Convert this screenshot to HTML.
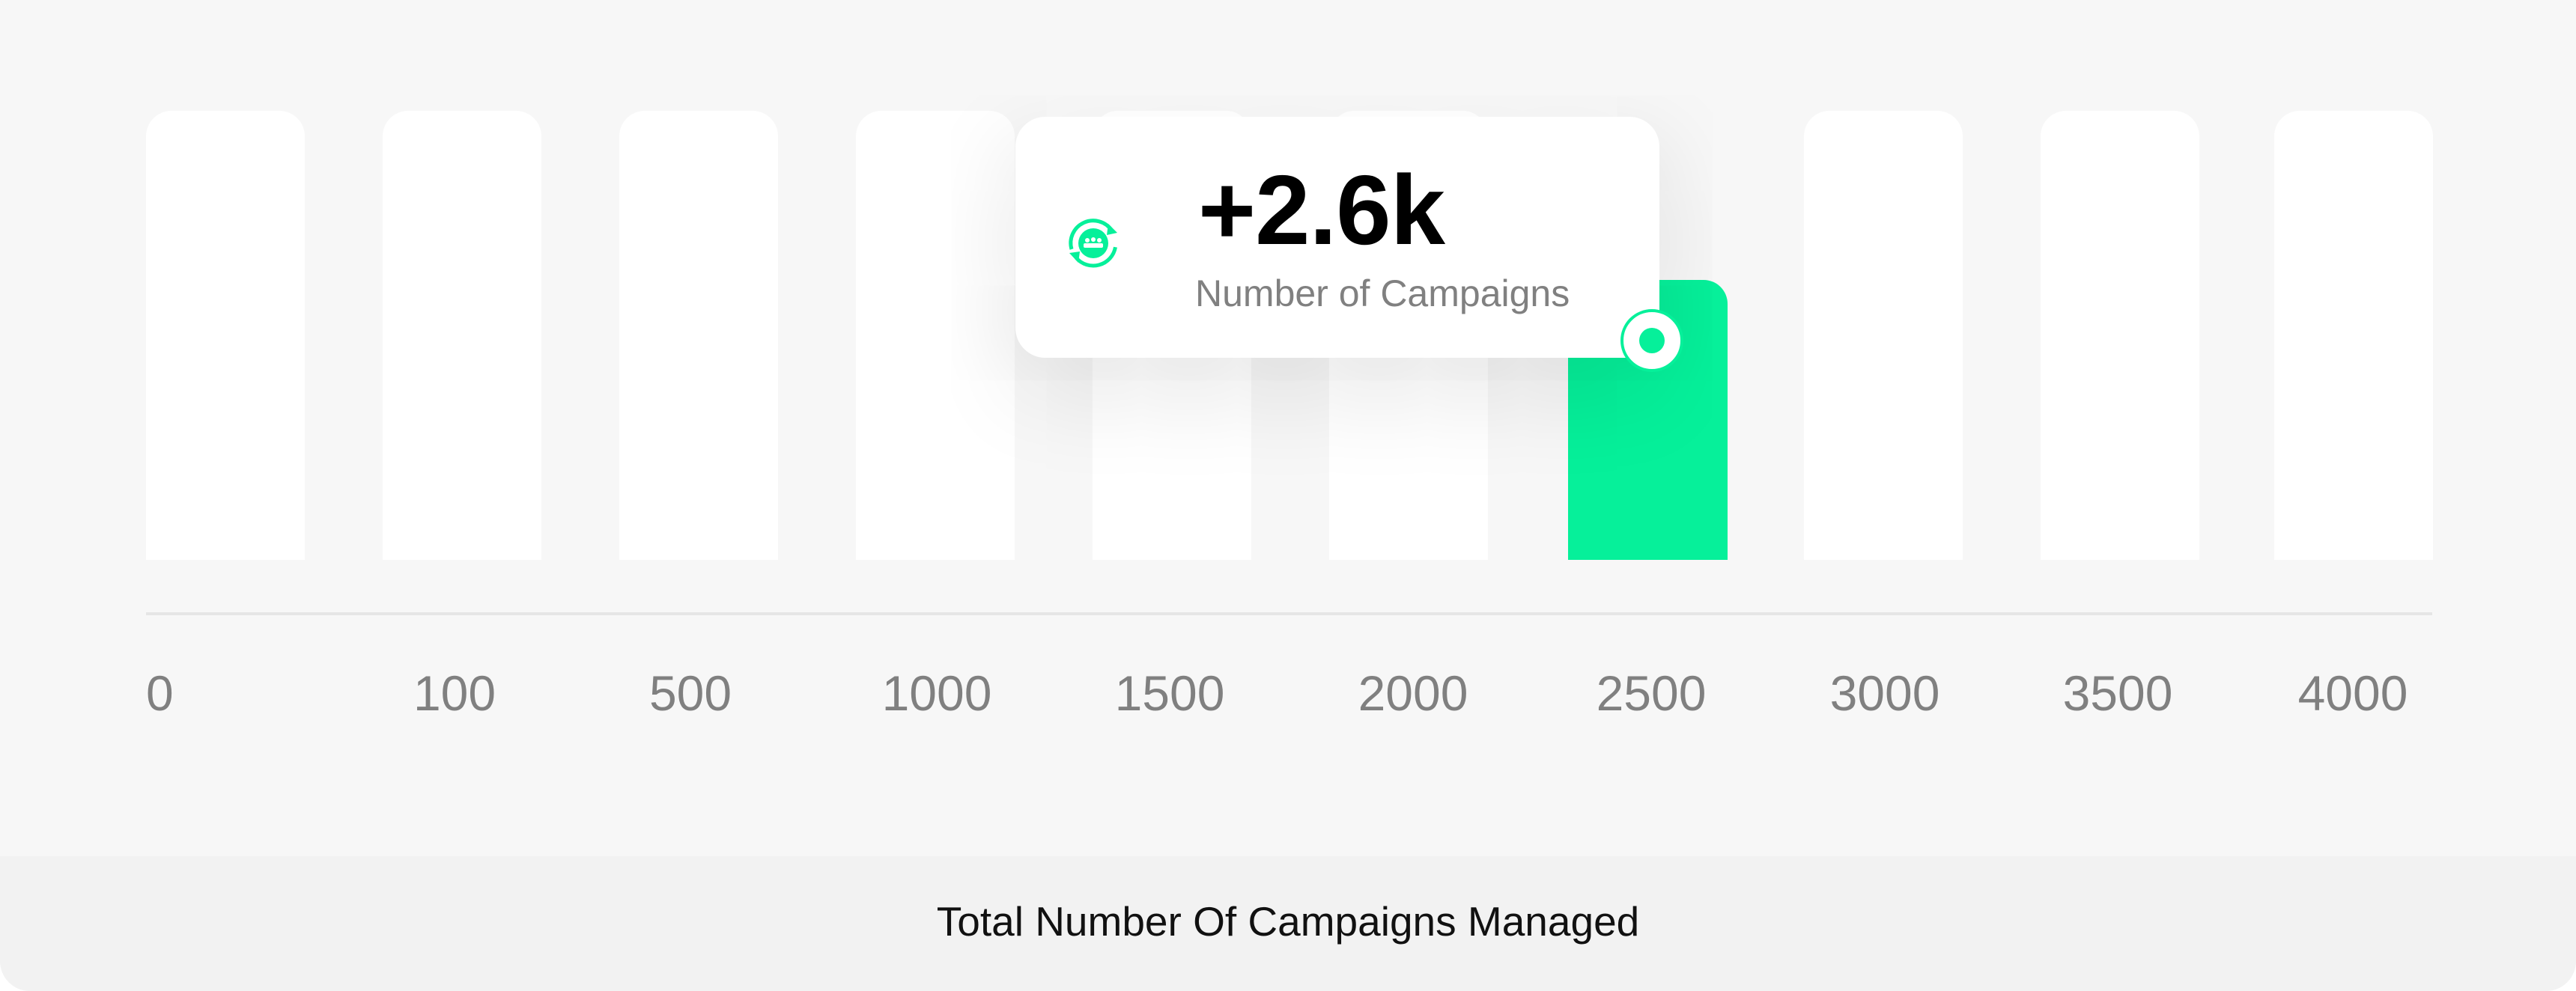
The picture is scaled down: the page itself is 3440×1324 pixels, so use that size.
<!DOCTYPE html>
<html><head><meta charset="utf-8"><style>
*{margin:0;padding:0;box-sizing:border-box}
body{width:3440px;height:1324px;background:#fff;position:relative;overflow:hidden;font-family:"Liberation Sans",sans-serif}
.wrap{position:absolute;left:0;top:0;width:3440px;height:1324px;background:#f7f7f7;border-radius:0 0 40px 40px;overflow:hidden}
.bar{position:absolute;top:148px;width:212px;height:600px;background:#fff;border-radius:34px 34px 0 0}
.axis{position:absolute;left:195px;top:818px;width:3053px;height:4px;background:#e6e6e6}
.lbl{position:absolute;top:888px;font-size:66px;color:#808080;width:300px;text-align:center;letter-spacing:0px}
.foot{position:absolute;left:0;top:1144px;width:3440px;height:180px;background:#f2f2f2;text-align:center;line-height:174px;font-size:55px;color:#111}
.tip{position:absolute;left:1356px;top:156px;width:860px;height:322px;background:#fff;border-radius:40px;box-shadow:0 40px 140px rgba(0,0,0,0.13)}
.green{position:absolute;left:2094px;top:374px;width:213px;height:374px;background:#06f09a;border-radius:0 32px 0 0}
.dot{position:absolute;left:2164px;top:413px;width:84px;height:84px;border-radius:50%;background:#fff;border:4px solid #06f09a}
.dot::after{content:"";position:absolute;left:21px;top:21px;width:34px;height:34px;border-radius:50%;background:#06f09a}
</style></head><body>
<div class="wrap">
<div class="bar" style="left:195px"></div>
<div class="bar" style="left:511px"></div>
<div class="bar" style="left:827px"></div>
<div class="bar" style="left:1143px"></div>
<div class="bar" style="left:1459px"></div>
<div class="bar" style="left:1775px"></div>
<div class="bar" style="left:2095px;background:transparent"></div>
<div class="bar" style="left:2409px"></div>
<div class="bar" style="left:2725px"></div>
<div class="bar" style="left:3037px"></div>
<div class="green"></div>
<div class="axis"></div>
<div class="lbl" style="left:195px;width:auto;text-align:left">0</div>
<div class="lbl" style="left:457px">100</div>
<div class="lbl" style="left:772px">500</div>
<div class="lbl" style="left:1101px">1000</div>
<div class="lbl" style="left:1412px">1500</div>
<div class="lbl" style="left:1737px">2000</div>
<div class="lbl" style="left:2055px">2500</div>
<div class="lbl" style="left:2367px">3000</div>
<div class="lbl" style="left:2678px">3500</div>
<div class="lbl" style="left:2992px">4000</div>
<div class="tip">
<svg style="position:absolute;left:64px;top:129px" width="80" height="80" viewBox="0 0 80 80">
<path d="M 11 48 A 30 30 0 0 1 64.6 22.8" fill="none" stroke="#06f09a" stroke-width="5"/>
<path d="M 69.5 45.2 A 30 30 0 0 1 17 59.3" fill="none" stroke="#06f09a" stroke-width="5"/>
<polygon points="60,14 72,26 58,29" fill="#06f09a"/>
<polygon points="20,66 8,53 22,51" fill="#06f09a"/>
<circle cx="40" cy="40" r="20" fill="#06f09a"/>
<g fill="#fff"><circle cx="32" cy="36" r="3"/><circle cx="40" cy="35" r="3"/><circle cx="48" cy="36" r="3"/>
<rect x="27" y="40" width="26" height="6" rx="2"/></g>
</svg>
<div style="position:absolute;left:244px;top:50px;font-size:132px;font-weight:bold;color:#000;letter-spacing:-1px;line-height:150px">+2.6k</div>
<div style="position:absolute;left:240px;top:206px;font-size:50px;color:#808080;line-height:60px">Number of Campaigns</div>
</div>
<div class="dot"></div>
<div class="foot">Total Number Of Campaigns Managed</div>
</div>
</body></html>
